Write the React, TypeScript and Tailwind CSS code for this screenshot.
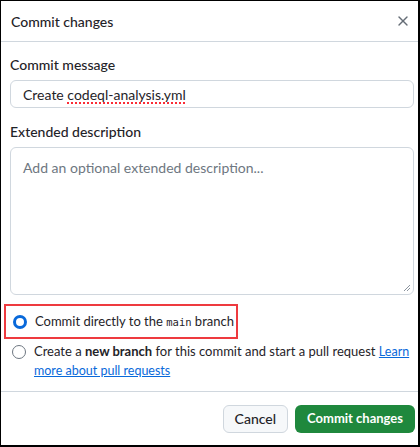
import { X } from "lucide-react";

const App = () => {
    return (
        <div className="w-[420px] h-[447px] bg-white border-l border-t border-r-2 border-b-2 border-black flex flex-col text-[13px] text-[#1f2328]" style={{ fontFamily: 'Lato, "Liberation Sans", sans-serif' }}>
            {/* HEADER */}
            <div className="h-[41px] shrink-0 flex items-center justify-between pl-[10px] pr-[7px] border-b border-[#d0d7de]">
                <div className="text-[14px] font-medium">Commit changes</div>
                <X size={16} strokeWidth={2} className="text-[#656d76]" />
            </div>

            {/* BODY */}
            <div className="flex-1 pl-[9px] pr-[4px] pt-[13px]">
                <div className="text-[14px] font-medium leading-5">Commit message</div>
                <div className="mt-[5px] h-[28px] border border-[#d0d7de] rounded-md flex items-center px-[12px] text-[14px]">
                    <span>Create <span className="underline decoration-dotted decoration-red-500 decoration-2 underline-offset-[3px]">codeql-analysis.yml</span></span>
                </div>

                <div className="text-[14px] font-medium leading-5 mt-[14px]">Extended description</div>
                <div className="mt-[5px] h-[148px] border border-[#d0d7de] rounded-md px-[12px] pt-[9px] text-[14px] text-[#6e7781] relative">
                    Add an optional extended description...
                    <svg className="absolute right-[2px] bottom-[2px]" width="8" height="8" viewBox="0 0 8 8">
                        <path d="M7 1 L1 7 M7 4 L4 7" stroke="#8b949e" strokeWidth="1" />
                    </svg>
                </div>

                {/* RADIOS */}
                <div className="mt-[9px] -ml-[6px] w-[234px] h-[35px] border-2 border-[#ee3a3f] flex items-center pl-[7px] gap-[8px] whitespace-nowrap">
                    <span className="w-[14px] h-[14px] rounded-full border-[3.5px] border-[#0969da] shrink-0" />
                    <span>Commit directly to the <code className="text-[10.5px]" style={{ fontFamily: '"DejaVu Sans Mono", monospace' }}>main</code> branch</span>
                </div>
                <div className="mt-[3px] flex items-start gap-[8px] pl-[2px]">
                    <span className="mt-[3px] w-[14px] h-[14px] rounded-full border border-[#6e7781] shrink-0" />
                    <span className="leading-[19px]">
                        Create a <b className="font-bold">new branch</b> for this commit and start a pull request{" "}
                        <a className="text-[#0969da] underline text-[12.5px]">Learn more about pull requests</a>
                    </span>
                </div>
            </div>

            {/* FOOTER */}
            <div className="h-[54px] shrink-0 border-t border-[#d0d7de] flex items-center justify-end gap-[7px] pr-[3px] text-[14px]">
                <button className="h-[28px] px-[11px] rounded-md border border-[#d0d7de] bg-[#f6f8fa] font-medium">Cancel</button>
                <button className="h-[28px] px-[12px] rounded-md bg-[#1f883d] text-white font-bold text-[13px]">Commit changes</button>
            </div>
        </div>
    )
}

export default App
